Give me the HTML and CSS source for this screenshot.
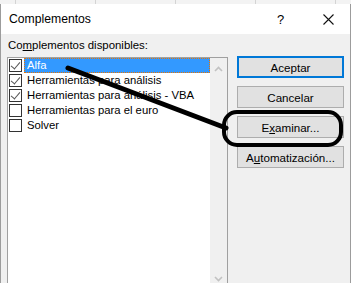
FILE: index.html
```html
<!DOCTYPE html>
<html lang="es">
<head>
  <meta charset="UTF-8" />
  <title>Complementos</title>
  <link rel="stylesheet" href="styles.css">
</head>
<body>
  <div class="sheet">
    <span class="cell first"></span>
    <span class="cell"></span>
    <span class="cell"></span>
    <span class="cell"></span>
    <span class="cell"></span>
  </div>

  <div class="dialog">
    <div class="titlebar">
      <span class="title">Complementos</span>
      <span class="help">?</span>
      <span class="close">
        <svg width="11" height="11" viewBox="0 0 11 11"><path d="M0.5 0.5 L10.5 10.5 M10.5 0.5 L0.5 10.5" stroke="#111" stroke-width="1.1" fill="none"/></svg>
      </span>
    </div>

    <div class="content">
      <div class="left">
        <div class="label">Co<u>m</u>plementos disponibles:</div>
        <div class="listbox">
          <ul class="items">
            <li class="item selected"><span class="box checked"></span><span class="name">Alfa</span></li>
            <li class="item"><span class="box checked"></span><span class="name">Herramientas para análisis</span></li>
            <li class="item"><span class="box checked"></span><span class="name">Herramientas para análisis - VBA</span></li>
            <li class="item"><span class="box"></span><span class="name">Herramientas para el euro</span></li>
            <li class="item"><span class="box"></span><span class="name">Solver</span></li>
          </ul>
          <div class="scrollbar">
            <svg class="arrow up" width="9" height="6" viewBox="0 0 9 6"><path d="M1 5 L4.5 1.5 L8 5" stroke="#c2c2c2" stroke-width="1.6" fill="none"/></svg>
            <svg class="arrow down" width="9" height="6" viewBox="0 0 9 6"><path d="M1 1 L4.5 4.5 L8 1" stroke="#c2c2c2" stroke-width="1.6" fill="none"/></svg>
          </div>
        </div>
      </div>

      <div class="buttons">
        <button class="btn default">Aceptar</button>
        <button class="btn">Cancelar</button>
        <button class="btn">E<u>x</u>aminar...</button>
        <button class="btn">A<u>u</u>tomatización...</button>
      </div>
    </div>
  </div>

  <!-- hand-drawn markup on top of the screenshot -->
  <svg class="marks" width="351" height="283" viewBox="0 0 351 283">
    <line x1="68" y1="68" x2="226" y2="128" stroke="#000" stroke-width="5" stroke-linecap="round"/>
    <rect x="224" y="112" width="117" height="33" rx="13" ry="13" stroke="#000" stroke-width="4" fill="none"/>
  </svg>
</body>
</html>
```

FILE: styles.css
```css
body {
  margin: 0;
  width: 351px;
  height: 283px;
  overflow: hidden;
  position: relative;
  font-family: "Liberation Sans", Arial, sans-serif;
  font-size: 11.5px;
  color: #000;
  background: #f0f0f0;
}
.sheet {
  display: flex;
  height: 4px;
  background: #f3f3f3;
}
.cell {
  width: 79px;
  flex: none;
  border-right: 1px solid #d4d4d4;
}
.cell.first {
  width: 15px;
}
.dialog {
  border-left: 1px solid #9c9c9c;
  border-right: 1px solid #9c9c9c;
  height: 279px;
  display: flex;
  flex-direction: column;
}
.titlebar {
  height: 30px;
  background: #fff;
  display: flex;
  align-items: center;
  padding-left: 8px;
  flex: none;
}
.title {
  font-size: 12.2px;
  flex: 1;
}
.help {
  width: 12px;
  font-size: 13px;
  margin-right: 34px;
}
.close {
  display: flex;
  margin-right: 16px;
}
.content {
  flex: 1;
  display: flex;
  padding: 4px 0 0 6px;
  background: #f0f0f0;
}
.left {
  width: 221px;
  display: flex;
  flex-direction: column;
}
.label {
  height: 15px;
  line-height: 15px;
  margin-bottom: 4px;
  padding-left: 1px;
  font-size: 11.4px;
}
.listbox {
  flex: 1;
  display: flex;
  border: 1px solid #a0a0a0;
  border-bottom: none;
  background: #fff;
}
.items {
  list-style: none;
  margin: 0;
  padding: 0;
  flex: 1;
  min-width: 0;
}
.item {
  height: 15px;
  display: flex;
  align-items: center;
  padding-left: 1px;
}
.box {
  width: 11px;
  height: 11px;
  border: 1px solid #333;
  background: #fff;
  flex: none;
  position: relative;
}
.box.checked::after {
  content: "";
  position: absolute;
  left: 3px;
  top: 0px;
  width: 4px;
  height: 8px;
  border-right: 1.3px solid #555;
  border-bottom: 1.3px solid #555;
  transform: rotate(40deg);
}
.name {
  margin-left: 2px;
  padding-left: 3px;
  line-height: 15px;
  height: 15px;
  font-size: 11.3px;
  flex: 1;
  min-width: 0;
  white-space: nowrap;
}
.item.selected .name {
  background: #3399ff;
  color: #fff;
  outline: 1px dotted #e87400;
  outline-offset: -1px;
}
.scrollbar {
  width: 17px;
  flex: none;
  background: #f0f0f0;
  display: flex;
  flex-direction: column;
  align-items: center;
  justify-content: space-between;
  padding: 8px 0 1px;
}
.buttons {
  margin-left: 9px;
  margin-top: 18px;
  display: flex;
  flex-direction: column;
  gap: 8px;
}
.btn {
  width: 107px;
  height: 22px;
  font-family: inherit;
  font-size: 11.6px;
  color: #000;
  background: #e1e1e1;
  border: 1px solid #adadad;
  padding: 0;
}
.btn.default {
  border: 2px solid #0078d7;
}
.marks {
  position: absolute;
  top: 0;
  left: 0;
  pointer-events: none;
}
```
